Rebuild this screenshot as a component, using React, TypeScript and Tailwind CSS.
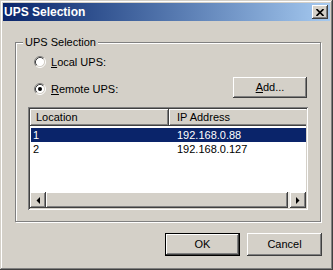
import React from 'react'

// --- classic Win2000 bevels ---
const raised =
  'bg-[#d4d0c8] shadow-[inset_-1px_-1px_#404040,inset_1px_1px_#ffffff,inset_-2px_-2px_#808080,inset_2px_2px_#d4d0c8]'
const sunken =
  'shadow-[inset_1px_1px_#808080,inset_-1px_-1px_#ffffff,inset_2px_2px_#404040,inset_-2px_-2px_#d4d0c8]'

function Radio({ checked }: { checked?: boolean }) {
  return (
    <svg width="12" height="12" viewBox="0 0 12 12" className="shrink-0">
      <circle cx="6" cy="6" r="4.5" fill="#fff" />
      <path d="M2.11 9.89 A5.5 5.5 0 0 1 9.89 2.11" fill="none" stroke="#808080" />
      <path d="M9.89 2.11 A5.5 5.5 0 0 1 2.11 9.89" fill="none" stroke="#fff" />
      <path d="M2.82 9.18 A4.5 4.5 0 0 1 9.18 2.82" fill="none" stroke="#404040" />
      <path d="M9.18 2.82 A4.5 4.5 0 0 1 2.82 9.18" fill="none" stroke="#d4d0c8" />
      {checked && <circle cx="6" cy="6" r="2" fill="#000" />}
    </svg>
  )
}

function Arrow({ dir }: { dir: 'left' | 'right' }) {
  return (
    <div className={`w-[16px] h-[16px] flex items-center justify-center ${raised}`}>
      <svg width="4" height="7" viewBox="0 0 4 7">
        {dir === 'left' ? <polygon points="4,0 4,7 0.5,3.5" fill="#000" /> : <polygon points="0,0 0,7 3.5,3.5" fill="#000" />}
      </svg>
    </div>
  )
}

const rows = [
  { loc: '1', ip: '192.168.0.88', selected: true },
  { loc: '2', ip: '192.168.0.127', selected: false },
]

export default function App() {
  return (
    <div
      className="w-[333px] h-[270px] bg-[#d4d0c8] p-[3px] flex flex-col text-[11px] text-black shadow-[inset_-1px_-1px_#404040,inset_1px_1px_#d4d0c8,inset_-2px_-2px_#808080,inset_2px_2px_#ffffff]"
      style={{ fontFamily: '"Liberation Sans", Arial, sans-serif' }}
    >
      {/* Title bar */}
      <div className="h-[18px] flex items-center justify-between pl-[1px] pr-[2px] bg-gradient-to-r from-[#0a246a] to-[#a6caf0]">
        <span className="text-white font-bold text-[12px] leading-none">UPS Selection</span>
        <div className={`w-[16px] h-[14px] flex items-center justify-center ${raised}`}>
          <svg width="8" height="7" viewBox="0 0 8 7">
            <path d="M0.5 0 L7.5 7 M7.5 0 L0.5 7" stroke="#000" strokeWidth="1.6" />
          </svg>
        </div>
      </div>

      {/* Body */}
      <div className="flex-1 flex flex-col pl-[12px] pt-[21px]">
        {/* Group box */}
        <div className="relative w-[306px] h-[180px] border border-[#808080] shadow-[1px_1px_0_#ffffff,inset_1px_1px_0_#ffffff] pt-[11px] px-[12px] flex flex-col">
          <span className="absolute -top-[7px] left-[7px] px-[2px] bg-[#d4d0c8] leading-[13px]">UPS Selection</span>

          <div className="h-[16px] flex items-center gap-[5px] pl-[6px]">
            <Radio />
            <span className="leading-[13px]">
              <span className="underline underline-offset-[1px]">L</span>ocal UPS:
            </span>
          </div>

          <div className="mt-[7px] h-[21px] flex items-center justify-between pr-[1px]">
            <div className="flex items-center gap-[5px] pl-[6px] mt-[3px]">
              <Radio checked />
              <span className="leading-[13px]">
                <span className="underline underline-offset-[1px]">R</span>emote UPS:
              </span>
            </div>
            <div className={`w-[74px] h-[21px] flex items-center justify-center ${raised}`}>
              <span>
                <span className="underline underline-offset-[1px]">A</span>dd...
              </span>
            </div>
          </div>

          {/* List view */}
          <div className={`mt-[9px] w-[280px] h-[103px] bg-white p-[2px] flex flex-col ${sunken}`}>
            <div className="flex h-[17px] overflow-hidden">
              <div className={`w-[139px] shrink-0 flex items-center pl-[6px] ${raised}`}>Location</div>
              <div className={`w-[160px] shrink-0 flex items-center pl-[8px] ${raised}`}>IP Address</div>
            </div>
            <div className="flex-1 pt-[2px] pl-[1px]">
              {rows.map((r) => (
                <div
                  key={r.loc}
                  className={`h-[14px] flex items-center leading-[14px] ${r.selected ? 'bg-[#0a246a] text-white' : ''}`}
                >
                  <span className="w-[138px] pl-[2px] shrink-0">{r.loc}</span>
                  <span className="pl-[8px]">{r.ip}</span>
                </div>
              ))}
            </div>
            {/* Horizontal scrollbar */}
            <div className="h-[16px] flex">
              <Arrow dir="left" />
              <div className={`flex-1 ${raised}`} />
              <div className="w-[2px] bg-[#ebe9e4]" />
              <Arrow dir="right" />
            </div>
          </div>
        </div>

        {/* Dialog buttons */}
        <div className="mt-[11px] flex justify-end gap-[7px] pr-[14px] w-[321px]">
          <div className="w-[75px] h-[23px] border border-black">
            <div className={`w-full h-full flex items-center justify-center ${raised}`}>OK</div>
          </div>
          <div className={`w-[75px] h-[23px] flex items-center justify-center ${raised}`}>Cancel</div>
        </div>
      </div>
    </div>
  )
}
